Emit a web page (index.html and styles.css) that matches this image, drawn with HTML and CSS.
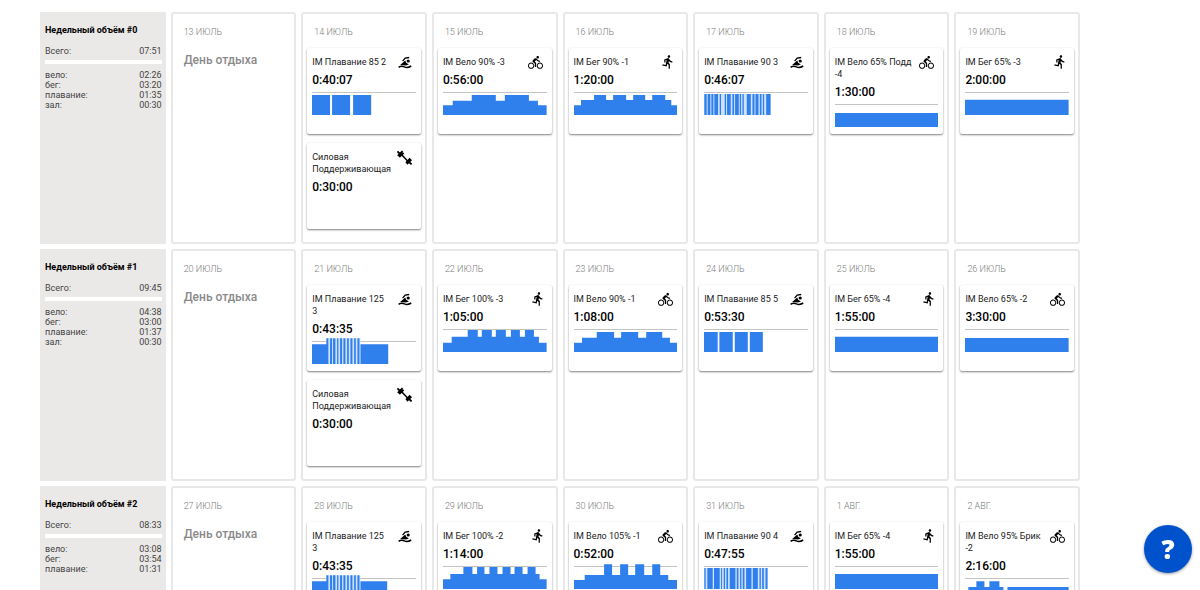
FILE: index.html
```
<!DOCTYPE html>
<html lang="ru">
<head>
<meta charset="utf-8">
<meta name="viewport" content="width=device-width, initial-scale=1">
<title>План тренировок</title>
<link rel="stylesheet" href="styles.css">
</head>
<body>
<svg class="defs" aria-hidden="true">
  <symbol id="swim" viewBox="0 0 15 15">
    <path d="M5.600 6.200 8.200 3.100 12.200 2.500" fill="none" stroke="#000" stroke-width="1.300"/>
    <path d="M3.200 10 8.200 5.400 9.200 7.800 11.800 9.600 9 10.400Z"/>
    <circle cx="11.200" cy="6" r="1.600"/>
    <path d="M1.600 12.300C3.600 10.900 5.400 10.900 7.400 11.900S11.600 12.700 14.200 11" fill="none" stroke="#000" stroke-width="1.500"/>
  </symbol>
  <symbol id="bike" viewBox="0 0 24 24">
    <path d="M15.5 5.5c1.1 0 2-.9 2-2s-.9-2-2-2-2 .9-2 2 .9 2 2 2zM5 12c-2.800 0-5 2.200-5 5s2.200 5 5 5 5-2.200 5-5-2.200-5-5-5zm0 8.500c-1.900 0-3.500-1.600-3.500-3.500s1.600-3.500 3.500-3.500 3.500 1.600 3.500 3.500-1.600 3.500-3.500 3.500zm5.800-10l2.400-2.400.8.8c1.300 1.300 3 2.100 5.100 2.100V9c-1.500 0-2.700-.6-3.600-1.500l-1.900-1.900c-.5-.4-1-.6-1.600-.6s-1.100.2-1.400.6L7.800 8.400c-.4.4-.6.9-.6 1.400 0 .6.2 1.100.6 1.400L11 14v5h2v-6.200l-2.200-2.300zM19 12c-2.800 0-5 2.200-5 5s2.200 5 5 5 5-2.200 5-5-2.200-5-5-5zm0 8.500c-1.900 0-3.500-1.600-3.500-3.500s1.600-3.500 3.500-3.500 3.500 1.600 3.500 3.500-1.600 3.500-3.500 3.500z"/>
  </symbol>
  <symbol id="run" viewBox="-4 1 24 24">
    <path d="M13.490 5.480c1.100 0 2-.9 2-2s-.9-2-2-2-2 .9-2 2 .9 2 2 2zm-3.600 13.900l1-4.400 2.100 2v6h2v-7.500l-2.100-2 .6-3c1.300 1.500 3.300 2.500 5.500 2.500v-2c-1.900 0-3.500-1-4.300-2.400l-1-1.600c-.4-.6-1-1-1.700-1-.3 0-.5.1-.8.1l-5.200 2.200v4.700h2v-3.400l1.800-.7-1.600 8.100-4.900-1-.4 2 7 1.400z"/>
  </symbol>
  <symbol id="gym" viewBox="0 0 15 15">
    <path d="M3 3 12 12.500" stroke="#000" stroke-width="1.500"/>
    <path d="M.8 5.800 5.600 1.200M2.200 7 6.600 2.800M.4 1.400 3 4M9 12.800 13.200 8.400M9.800 14 14.500 9.600M12 12 14.600 14.400" stroke="#000" stroke-width="1.800" fill="none"/>
  </symbol>
</svg>

<main class="plan">
  <section class="summary">
    <h2>Недельный объём #0</h2>
    <dl class="total"><dt>Всего:</dt><dd>07:51</dd></dl>
    <dl class="split"><dt>вело:</dt><dd>02:26</dd><dt>бег:</dt><dd>03:20</dd><dt>плавание:</dt><dd>01:35</dd><dt>зал:</dt><dd>00:30</dd></dl>
  </section>
  <section class="day"><h3>13 ИЮЛЬ</h3><p class="rest">День отдыха</p></section>
  <section class="day"><h3>14 ИЮЛЬ</h3>
    <article class="card"><header><h4>IM Плавание 85 2</h4><svg class="icon"><use href="#swim"/></svg></header><time>0:40:07</time>
      <div class="chart"><svg viewBox="0 0 310 78" preserveAspectRatio="none"><path d="M0 18H54V78H0ZM60 18H114V78H60ZM123 18H177V78H123Z"/></svg></div></article>
    <article class="card"><header><h4>Силовая Поддерживающая</h4><svg class="icon"><use href="#gym"/></svg></header><time>0:30:00</time></article>
  </section>
  <section class="day"><h3>15 ИЮЛЬ</h3>
    <article class="card"><header><h4>IM Вело 90% -3</h4><svg class="icon"><use href="#bike"/></svg></header><time>0:56:00</time>
      <div class="chart"><svg viewBox="0 0 310 78" preserveAspectRatio="none"><path d="M0 78V49H29V35H86V18H158V35H185V18H257V35H284V49H310V78Z"/></svg></div></article>
  </section>
  <section class="day"><h3>16 ИЮЛЬ</h3>
    <article class="card"><header><h4>IM Бег 90% -1</h4><svg class="icon"><use href="#run"/></svg></header><time>1:20:00</time>
      <div class="chart"><svg viewBox="0 0 310 78" preserveAspectRatio="none"><path d="M0 78V49H21V33H60V18H96V33H117V18H156V33H177V18H213V33H234V18H273V33H291V49H310V78Z"/></svg></div></article>
  </section>
  <section class="day"><h3>17 ИЮЛЬ</h3>
    <article class="card"><header><h4>IM Плавание 90 3</h4><svg class="icon"><use href="#swim"/></svg></header><time>0:46:07</time>
      <div class="chart"><svg viewBox="0 0 310 78" preserveAspectRatio="none"><path class="pale" d="M0 15H200V78H0Z"/><path d="M1 15H8V78H1ZM11 15H19V78H11ZM22 15H28V78H22ZM31 15H42V78H31ZM47 15H51V78H47ZM62 15H66V78H62ZM69 15H80V78H69ZM85 15H90V78H85ZM93 15H104V78H93ZM107 15H111V78H107ZM115 15H119V78H115ZM128 15H140V78H128ZM145 15H151V78H145ZM154 15H163V78H154ZM167 15H172V78H167ZM176 15H180V78H176ZM186 15H199V78H186Z"/></svg></div></article>
  </section>
  <section class="day"><h3>18 ИЮЛЬ</h3>
    <article class="card"><header><h4>IM Вело 65% Подд -4</h4><svg class="icon"><use href="#bike"/></svg></header><time>1:30:00</time>
      <div class="chart"><svg viewBox="0 0 310 78" preserveAspectRatio="none"><path d="M0 36H310V78H0Z"/></svg></div></article>
  </section>
  <section class="day"><h3>19 ИЮЛЬ</h3>
    <article class="card"><header><h4>IM Бег 65% -3</h4><svg class="icon"><use href="#run"/></svg></header><time>2:00:00</time>
      <div class="chart"><svg viewBox="0 0 310 78" preserveAspectRatio="none"><path d="M0 32H310V78H0Z"/></svg></div></article>
  </section>

  <section class="summary">
    <h2>Недельный объём #1</h2>
    <dl class="total"><dt>Всего:</dt><dd>09:45</dd></dl>
    <dl class="split"><dt>вело:</dt><dd>04:38</dd><dt>бег:</dt><dd>03:00</dd><dt>плавание:</dt><dd>01:37</dd><dt>зал:</dt><dd>00:30</dd></dl>
  </section>
  <section class="day"><h3>20 ИЮЛЬ</h3><p class="rest">День отдыха</p></section>
  <section class="day"><h3>21 ИЮЛЬ</h3>
    <article class="card"><header><h4>IM Плавание 125 3</h4><svg class="icon"><use href="#swim"/></svg></header><time>0:43:35</time>
      <div class="chart"><svg viewBox="0 0 310 78" preserveAspectRatio="none"><path class="pale" d="M43 1H145V78H43Z"/><path d="M0 19H43V78H0ZM43 1H49V78H43ZM54 1H60V78H54ZM63 1H70V78H63ZM75 1H79V78H75ZM84 1H90V78H84ZM94 1H100V78H94ZM105 1H110V78H105ZM115 1H121V78H115ZM126 1H131V78H126ZM136 1H142V78H136ZM145 19H228V78H145Z"/></svg></div></article>
    <article class="card"><header><h4>Силовая Поддерживающая</h4><svg class="icon"><use href="#gym"/></svg></header><time>0:30:00</time></article>
  </section>
  <section class="day"><h3>22 ИЮЛЬ</h3>
    <article class="card"><header><h4>IM Бег 100% -3</h4><svg class="icon"><use href="#run"/></svg></header><time>1:05:00</time>
      <div class="chart"><svg viewBox="0 0 310 78" preserveAspectRatio="none"><path d="M0 78V50H26V32H74V12H104V32H116V12H146V32H158V12H188V32H203V12H230V32H245V12H272V32H287V50H310V78Z"/></svg></div></article>
  </section>
  <section class="day"><h3>23 ИЮЛЬ</h3>
    <article class="card"><header><h4>IM Вело 90% -1</h4><svg class="icon"><use href="#bike"/></svg></header><time>1:08:00</time>
      <div class="chart"><svg viewBox="0 0 310 78" preserveAspectRatio="none"><path d="M0 78V50H24V35H68V18H120V35H141V18H192V35H216V18H264V35H287V50H310V78Z"/></svg></div></article>
  </section>
  <section class="day"><h3>24 ИЮЛЬ</h3>
    <article class="card"><header><h4>IM Плавание 85 5</h4><svg class="icon"><use href="#swim"/></svg></header><time>0:53:30</time>
      <div class="chart"><svg viewBox="0 0 310 78" preserveAspectRatio="none"><path d="M0 18H41V78H0ZM46 18H86V78H46ZM92 18H131V78H92ZM137 18H176V78H137Z"/></svg></div></article>
  </section>
  <section class="day"><h3>25 ИЮЛЬ</h3>
    <article class="card"><header><h4>IM Бег 65% -4</h4><svg class="icon"><use href="#run"/></svg></header><time>1:55:00</time>
      <div class="chart"><svg viewBox="0 0 310 78" preserveAspectRatio="none"><path d="M0 32H310V78H0Z"/></svg></div></article>
  </section>
  <section class="day"><h3>26 ИЮЛЬ</h3>
    <article class="card"><header><h4>IM Вело 65% -2</h4><svg class="icon"><use href="#bike"/></svg></header><time>3:30:00</time>
      <div class="chart"><svg viewBox="0 0 310 78" preserveAspectRatio="none"><path d="M0 36H310V78H0Z"/></svg></div></article>
  </section>

  <section class="summary">
    <h2>Недельный объём #2</h2>
    <dl class="total"><dt>Всего:</dt><dd>08:33</dd></dl>
    <dl class="split"><dt>вело:</dt><dd>03:08</dd><dt>бег:</dt><dd>03:54</dd><dt>плавание:</dt><dd>01:31</dd></dl>
  </section>
  <section class="day"><h3>27 ИЮЛЬ</h3><p class="rest">День отдыха</p></section>
  <section class="day"><h3>28 ИЮЛЬ</h3>
    <article class="card"><header><h4>IM Плавание 125 3</h4><svg class="icon"><use href="#swim"/></svg></header><time>0:43:35</time>
      <div class="chart"><svg viewBox="0 0 310 78" preserveAspectRatio="none"><path class="pale" d="M43 1H145V78H43Z"/><path d="M0 19H43V78H0ZM43 1H49V78H43ZM54 1H60V78H54ZM63 1H70V78H63ZM75 1H79V78H75ZM84 1H90V78H84ZM94 1H100V78H94ZM105 1H110V78H105ZM115 1H121V78H115ZM126 1H131V78H126ZM136 1H142V78H136ZM145 19H225V78H145Z"/></svg></div></article>
  </section>
  <section class="day"><h3>29 ИЮЛЬ</h3>
    <article class="card"><header><h4>IM Бег 100% -2</h4><svg class="icon"><use href="#run"/></svg></header><time>1:14:00</time>
      <div class="chart"><svg viewBox="0 0 310 78" preserveAspectRatio="none"><path d="M0 78V49H22V33H61V12H88V33H102V12H124V33H139V12H163V33H178V12H202V33H214V12H238V33H253V12H277V33H289V49H310V78Z"/></svg></div></article>
  </section>
  <section class="day"><h3>30 ИЮЛЬ</h3>
    <article class="card"><header><h4>IM Вело 105% -1</h4><svg class="icon"><use href="#bike"/></svg></header><time>0:52:00</time>
      <div class="chart"><svg viewBox="0 0 310 78" preserveAspectRatio="none"><path d="M0 78V51H32V36H90V4H114V36H138V4H162V36H183V4H210V36H234V4H258V36H282V51H310V78Z"/></svg></div></article>
  </section>
  <section class="day"><h3>31 ИЮЛЬ</h3>
    <article class="card"><header><h4>IM Плавание 90 4</h4><svg class="icon"><use href="#swim"/></svg></header><time>0:47:55</time>
      <div class="chart"><svg viewBox="0 0 310 78" preserveAspectRatio="none"><path class="pale" d="M0 15H191V78H0Z"/><path d="M1 15H5V78H1ZM10 15H26V78H10ZM30 15H47V78H30ZM51 15H54V78H51ZM59 15H63V78H59ZM67 15H72V78H67ZM77 15H94V78H77ZM98 15H103V78H98ZM108 15H112V78H108ZM116 15H121V78H116ZM126 15H142V78H126ZM146 15H161V78H146ZM166 15H170V78H166ZM174 15H179V78H174ZM184 15H190V78H184Z"/></svg></div></article>
  </section>
  <section class="day"><h3>1 АВГ.</h3>
    <article class="card"><header><h4>IM Бег 65% -4</h4><svg class="icon"><use href="#run"/></svg></header><time>1:55:00</time>
      <div class="chart"><svg viewBox="0 0 310 78" preserveAspectRatio="none"><path d="M0 33H310V78H0Z"/></svg></div></article>
  </section>
  <section class="day"><h3>2 АВГ.</h3>
    <article class="card"><header><h4>IM Вело 95% Брик -2</h4><svg class="icon"><use href="#bike"/></svg></header><time>2:16:00</time>
      <div class="chart"><svg viewBox="0 0 310 78" preserveAspectRatio="none"><path d="M10 78V36H34V19H58V36H73V19H103V36H115V78ZM127 36H310V78H127Z"/></svg></div></article>
  </section>
</main>

<button class="help" type="button" aria-label="Помощь">?</button>
</body>
</html>
```
FILE: styles.css
```
* {
  box-sizing: border-box;
}

body,
h2,
h3,
h4,
p,
dl,
dd {
  margin: 0;
}

body {
  background: #fff;
  color: #000;
  font-family: Roboto, "Liberation Sans", sans-serif;
}

.defs {
  position: absolute;
  width: 0;
  height: 0;
}

.plan {
  display: grid;
  grid-template-columns: repeat(8, minmax(0, 1fr));
  grid-auto-rows: minmax(232px, auto);
  gap: 5px;
  padding: 12px 120px 12px 40px;
}

.summary {
  padding: 12px 4px 12px 5px;
  background: #ebe9e8;
  color: #444;
  font-size: 9px;
  line-height: 10px;
}

.summary h2 {
  margin-bottom: 10px;
  color: #000;
  font-size: 9px;
  font-weight: 700;
  line-height: 12px;
}

.total,
.split {
  display: grid;
  grid-template-columns: 1fr auto;
}

.total {
  padding-bottom: 4px;
  border-bottom: 4px solid #fff;
}

.split {
  padding-top: 6px;
}

.day {
  display: flex;
  flex-direction: column;
  gap: 9px;
  padding: 11px 4px;
  border: 2px solid #e9e8e8;
  border-radius: 3px;
}

.day h3 {
  padding-left: 7px;
  color: #7c7c7c;
  font-size: 9px;
  font-weight: 300;
  line-height: 14px;
}

.rest {
  padding: 5px 7px;
  color: #8a8a8a;
  font-size: 12px;
  font-weight: 500;
  line-height: 14px;
}

.card {
  min-height: 86px;
  padding: 8px 5px 6px;
  border-radius: 2px;
  box-shadow: 0 1px 2px rgba(0, 0, 0, 0.5);
}

.card header {
  display: flex;
  gap: 8px;
  justify-content: space-between;
  padding-right: 4px;
}

.card h4 {
  flex: 1;
  min-width: 0;
  color: #222;
  font-size: 9px;
  font-weight: 400;
  line-height: 12px;
}

.icon {
  flex: none;
  width: 15px;
  height: 15px;
  margin: -1px 0 -2px;
}

.card time {
  display: block;
  padding: 5px 0;
  font-size: 12px;
  font-weight: 500;
  line-height: 14px;
}

.chart {
  border-top: 1px solid #c4c4c4;
}

.chart svg {
  display: block;
  width: 100%;
  height: 26px;
  margin-top: -4px;
  fill: #2f80ed;
}

.chart .pale {
  fill: #d0e2fb;
}

.help {
  position: fixed;
  right: 8px;
  bottom: 17px;
  width: 48px;
  height: 48px;
  padding: 0;
  border: 0;
  border-radius: 50%;
  background: #0052cc;
  box-shadow: 0 1px 3px rgba(0, 0, 0, 0.4);
  color: #fff;
  font: 800 26px/48px "Open Sans", sans-serif;
}
```
